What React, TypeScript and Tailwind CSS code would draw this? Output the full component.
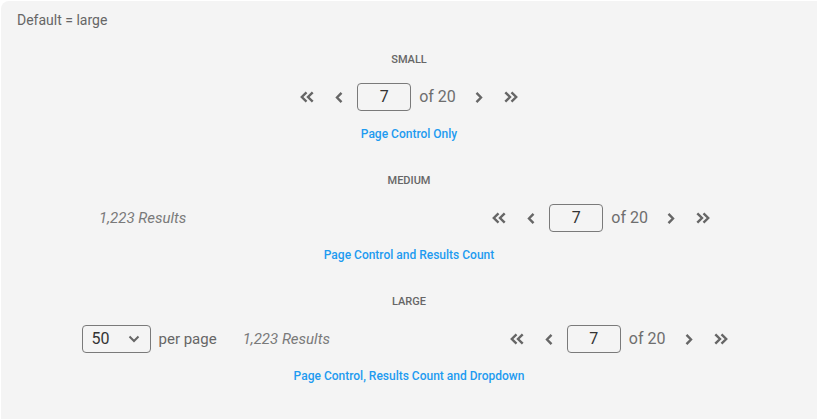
import React from 'react';

// double chevron (first / last)
function DoubleChevron({ right = false }: { right?: boolean }) {
  return (
    <svg
      width="16"
      height="12"
      viewBox="0 0 16 12"
      fill="none"
      stroke="#666"
      strokeWidth="2.4"
      className={right ? 'rotate-180' : ''}
    >
      <path d="M7.5 1.3 L2.8 6 L7.5 10.7" />
      <path d="M13.7 1.3 L9 6 L13.7 10.7" />
    </svg>
  );
}

// single chevron (prev / next)
function SingleChevron({ right = false }: { right?: boolean }) {
  return (
    <svg
      width="10"
      height="13"
      viewBox="0 0 10 13"
      fill="none"
      stroke="#666"
      strokeWidth="2.4"
      className={right ? 'rotate-180' : ''}
    >
      <path d="M7.5 1.8 L3 6.5 L7.5 11.2" />
    </svg>
  );
}

function PageControl() {
  return (
    <div className="flex items-center">
      <button className="w-8 h-7 flex items-center justify-center">
        <DoubleChevron />
      </button>
      <button className="w-8 h-7 flex items-center justify-center">
        <SingleChevron />
      </button>
      <div className="ml-0.5 w-[54px] h-7 border border-[#7a7a7a] rounded flex items-center justify-center text-base text-[#333]">
        7
      </div>
      <span className="ml-2 mr-[7px] text-base text-[#6e6e6e]">of 20</span>
      <button className="w-8 h-7 flex items-center justify-center">
        <SingleChevron right />
      </button>
      <button className="w-8 h-7 flex items-center justify-center">
        <DoubleChevron right />
      </button>
    </div>
  );
}

function Results() {
  return <span className="text-[15px] italic text-[#7a7a7a]">1,223 Results</span>;
}

function Section({
  title,
  caption,
  children,
}: {
  title: string;
  caption: string;
  children: React.ReactNode;
}) {
  return (
    <div className="flex flex-col items-center">
      <div className="h-4 leading-4 text-[11px] font-medium text-[#666] uppercase">{title}</div>
      <div className="mt-[15px] w-full h-7 flex justify-center">{children}</div>
      <div className="mt-[15px] h-4 leading-4 text-xs font-medium text-[#1e9bf0]">{caption}</div>
    </div>
  );
}

export default function App() {
  return (
    <div
      className="w-full h-[419px] bg-white overflow-hidden pl-px pt-px"
      style={{ fontFamily: 'Roboto, "Liberation Sans", sans-serif' }}
    >
      <div className="w-[830px] h-[430px] rounded-lg bg-[#f4f4f4]">
        <div className="w-[816px] pt-[9px]">
          <div className="pl-4 h-5 leading-5 text-sm text-[#666]">Default = large</div>

          <div className="mt-[22px] flex flex-col gap-[31px]">
            <Section title="Small" caption="Page Control Only">
              <PageControl />
            </Section>

            <Section title="Medium" caption="Page Control and Results Count">
              <div className="w-[620px] flex items-center justify-between">
                <Results />
                <PageControl />
              </div>
            </Section>

            <Section title="Large" caption="Page Control, Results Count and Dropdown">
              <div className="w-[655px] flex items-center justify-between">
                <div className="flex items-center">
                  <div className="w-[69px] h-7 border border-[#7a7a7a] rounded flex items-center justify-between pl-[9px] pr-[10px]">
                    <span className="text-base text-[#333]">50</span>
                    <svg width="12" height="8" viewBox="0 0 12 8" fill="none" stroke="#666" strokeWidth="2">
                      <path d="M1.5 1.5 L6 6 L10.5 1.5" />
                    </svg>
                  </div>
                  <span className="ml-2 text-[15px] text-[#666]">per page</span>
                  <span className="ml-[26px]">
                    <Results />
                  </span>
                </div>
                <PageControl />
              </div>
            </Section>
          </div>
        </div>
      </div>
    </div>
  );
}
